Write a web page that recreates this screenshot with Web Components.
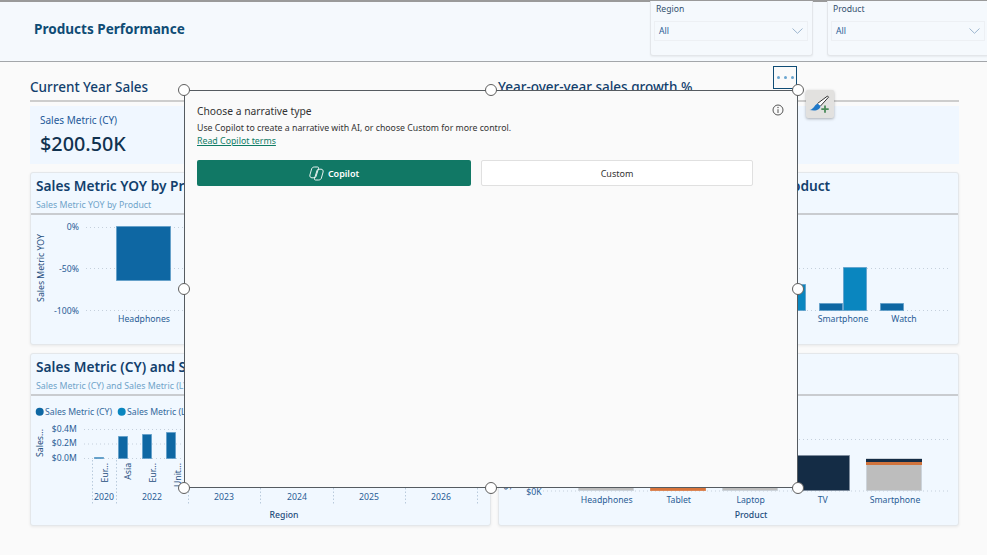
<!DOCTYPE html>
<html lang="en"><head><meta charset="utf-8"><title>Products Performance</title>
<style>
html,body{margin:0;padding:0;width:987px;height:555px;overflow:hidden;background:#fafafa;font-family:"Noto Sans","Open Sans",sans-serif;color:#0f4c81}
</style></head><body>
<template id="t-slicer"><style>
:host{display:flex;flex-direction:column;box-sizing:border-box;width:163px;height:55px;background:#f5f9fd;border:1px solid #e3e6ea;border-top:0;border-radius:0 0 3px 3px;padding:2px 4px 0 3px;box-shadow:0 1px 2px rgba(0,0,0,.06)}
.l{font-size:8.6px;line-height:13px;color:#33506e;padding-left:2px;height:18px}
.d{box-sizing:border-box;height:20px;border:1px solid #edf0f4;display:flex;align-items:center;justify-content:space-between;padding:0 4px 0 4px;font-size:8.6px;color:#2a5d96}
svg{display:block}
</style><div class="l"><slot name="label"></slot></div><div class="d"><span>All</span><svg width="11" height="6" viewBox="0 0 11 6"><path d="M.5.5 5.5 5.300 10.500.5" fill="none" stroke="#9db6cf" stroke-width="1"/></svg></div></template>

<template id="t-head"><style>
:host{display:flex;box-sizing:border-box;height:62px;background:#f5f9fd;border-top:2px solid #9a9a9a;border-bottom:1px solid #a3a6aa;justify-content:space-between}
.t{padding:18px 0 0 34px;font-size:13.55px;line-height:19px;font-weight:700;color:#0f4c75}
.s{display:flex;gap:14px;margin-right:-3px;height:55px;margin-top:-1px}
</style><div class="t"><slot name="title"></slot></div><div class="s"><slot></slot></div></template>

<template id="t-card"><style>
:host{display:flex;flex-direction:column;box-sizing:border-box;height:173px;background:#f1f8ff;border:1px solid #e4e7ea;border-radius:3px;box-shadow:0 1px 3px rgba(0,0,0,.07);overflow:hidden}
.h{box-sizing:border-box;height:42px;border-bottom:2px solid #c9ccd0;padding:2px 5px 0 5px;flex:none}
.a{font-size:13.7px;line-height:21px;font-weight:600;color:#123f6d;white-space:nowrap}
.b{font-size:8.8px;line-height:13px;margin-top:3px;color:#6fa3c9;white-space:nowrap}
.c{flex:1;position:relative;min-height:0}
</style><div class="h"><div class="a"><slot name="title"></slot></div><div class="b"><slot name="sub"></slot></div></div><div class="c"><slot></slot></div></template>

<template id="t-plot"><style>
:host{display:block;position:absolute;inset:0;font-size:9px;color:#2a5d96}
svg{position:absolute;left:0;top:0;display:block}
text{font-family:"Noto Sans","Open Sans",sans-serif}
</style><svg id="s" xmlns="http://www.w3.org/2000/svg"></svg></template>

<template id="t-handle"><style>
:host{display:block;position:absolute;width:12px;height:12px;box-sizing:border-box;border-radius:50%;background:#fff;border:1px solid #5e5e5e;z-index:3}
</style></template>

<template id="t-narr"><style>
:host{display:block;position:absolute;left:184px;top:90px;width:614px;height:398px;box-sizing:border-box;background:#fafafa;border:1px solid #555b60;z-index:2;color:#333}
.p{padding:13px 44px 0 12px;box-sizing:border-box}
.h{font-size:10.3px;line-height:15px;font-weight:400;color:#333}
.d{font-size:8.75px;line-height:13px;margin-top:3px;color:#333;white-space:nowrap}
a{display:block;font-size:8.8px;line-height:13px;color:#0f7c66;text-decoration:underline}
.btns{display:flex;gap:10px;margin-top:12px;width:556px}
.btn{height:26px;box-sizing:border-box;border-radius:2px;font-size:9px;display:flex;align-items:center;justify-content:center;gap:4px}
.pri{width:274px;background:#117865;color:#fff;font-weight:600}
.sec{width:272px;background:#fff;border:1px solid #e0e0e0;color:#333}
.i{position:absolute;right:13px;top:13px;display:block}
</style><svg class="i" width="12" height="12" viewBox="0 0 12 12"><circle cx="6" cy="6" r="5" fill="none" stroke="#555" stroke-width="1"/><path d="M6 5.200V9" stroke="#555" stroke-width="1"/><circle cx="6" cy="3.500" r=".7" fill="#555"/></svg>
<div class="p"><div class="h">Choose a narrative type</div><div class="d">Use Copilot to create a narrative with AI, or choose Custom for more control.</div><a>Read Copilot terms</a>
<div class="btns"><div class="btn pri"><svg width="15" height="15" viewBox="0 0 15 15" fill="none" stroke="#fff" stroke-width=".9" stroke-linejoin="round"><path d="M5.500 1H8.500C9.400 1 9.800 1.600 9.500 2.500L7 10.500C6.700 11.300 6 11.800 5 11.800H3C1.400 11.800 .5 10.500 .9 9L2.600 3C3 1.700 4 1 5.500 1Z"/><path d="M9.500 14H6.500C5.600 14 5.200 13.400 5.500 12.500L8 4.500C8.300 3.700 9 3.200 10 3.200H12C13.600 3.200 14.500 4.500 14.100 6L12.400 12C12 13.300 11 14 9.500 14Z"/></svg><span>Copilot</span></div><div class="btn sec">Custom</div></div></div></template>

<template id="t-more"><style>
:host{display:flex;position:absolute;left:773px;top:66px;width:24px;height:23px;box-sizing:border-box;border:1px solid #0f4c75;align-items:center;justify-content:center;gap:4px;z-index:1}
i{display:block;width:3px;height:3px;border-radius:50%;background:#6aa5cf}
</style><i></i><i></i><i></i></template>

<template id="t-brush"><style>
:host{display:block;position:absolute;left:806px;top:90px;width:28px;height:28px;background:#e2e1df;border-radius:2px;box-shadow:0 1px 3px rgba(0,0,0,.3);z-index:1}
svg{display:block}
</style><svg width="28" height="28" viewBox="0 0 28 28"><path d="M11.500 13.500 21.500 6 22.500 7.200 14.500 16" fill="#fff" stroke="#333" stroke-width="1"/><path d="M3.500 20C7.500 19.500 8.500 15 11.500 13.500L14.500 16C14.500 18.500 11.500 20.500 8 20.500Z" fill="#1f78c8"/><path d="M19 15.500V22.800M15.300 19.200H22.700" stroke="#4b8b5a" stroke-width="1.800" fill="none"/></svg></template>

<template id="t-page"><style>
:host{display:flex;flex-direction:column;width:987px;height:555px;position:relative;overflow:hidden}
main{display:flex;flex-direction:column;padding:0 28px 0 30px}
.titles{display:grid;grid-template-columns:461px 461px;gap:7px;height:40px;box-sizing:border-box;border-bottom:2px solid #cdcdcd;padding-top:16px}
.titles div{font-size:13.5px;line-height:19px;font-weight:500;color:#123f6d;white-space:nowrap}
.kpi{box-sizing:border-box;height:58px;margin-top:4px;background:#f0f7ff;padding:6px 0 0 10px}
.kl{font-size:10px;line-height:16px;color:#1f5a99}
.kv{font-size:19.8px;line-height:28px;color:#10324f;font-weight:500;margin-top:2px}
.g{display:grid;grid-template-columns:461px 461px;column-gap:7px;row-gap:8px;margin-top:8px;grid-auto-rows:173px}
</style><div><slot name="head"></slot></div><main><div class="titles"><div>Current Year Sales</div><div>Year-over-year sales growth %</div></div>
<div class="kpi"><div class="kl">Sales Metric (CY)</div><div class="kv">$200.50K</div></div>
<div class="g"><slot name="cards"></slot></div></main><slot name="over"></slot></template>

<products-page>
<report-head slot="head"><span slot="title">Products Performance</span>
  <report-slicer><span slot="label">Region</span></report-slicer>
  <report-slicer><span slot="label">Product</span></report-slicer>
</report-head>
<report-card slot="cards"><span slot="title">Sales Metric YOY by Product</span><span slot="sub">Sales Metric YOY by Product</span><report-plot kind="a"></report-plot></report-card>
<report-card slot="cards"><span slot="title">Sales Metric (CY) and Sales Metric (LY) by Product</span><report-plot kind="b"></report-plot></report-card>
<report-card slot="cards"><span slot="title">Sales Metric (CY) and Sales Metric (LY) by Region</span><span slot="sub">Sales Metric (CY) and Sales Metric (LY) by Year and Region</span><report-plot kind="c"></report-plot></report-card>
<report-card slot="cards"><span slot="title">Sales Metric by Product</span><report-plot kind="d"></report-plot></report-card>
<more-btn slot="over"></more-btn>
<brush-btn slot="over"></brush-btn>
<narrative-box slot="over"></narrative-box>
<sel-handle slot="over" style="left:178px;top:84px"></sel-handle>
<sel-handle slot="over" style="left:485px;top:84px"></sel-handle>
<sel-handle slot="over" style="left:792px;top:84px"></sel-handle>
<sel-handle slot="over" style="left:178px;top:283px"></sel-handle>
<sel-handle slot="over" style="left:792px;top:283px"></sel-handle>
<sel-handle slot="over" style="left:178px;top:482px"></sel-handle>
<sel-handle slot="over" style="left:485px;top:482px"></sel-handle>
<sel-handle slot="over" style="left:792px;top:482px"></sel-handle>
</products-page>
<script>
function reg(name,tid,extra){customElements.define(name,class extends HTMLElement{constructor(){super();const r=this.attachShadow({mode:"open"});r.appendChild(document.getElementById(tid).content.cloneNode(true));}connectedCallback(){if(extra)extra(this)}});}
const T=(x,y,s,o={})=>`<text x="${x}" y="${y}" font-size="${o.fs||8.7}" fill="${o.c||'#2a5d96'}" text-anchor="${o.a||'middle'}"${o.t?` transform="${o.t}"`:''}${o.w?` font-weight="${o.w}"`:''}>${s}</text>`;
const G=(x1,x2,y)=>`<path d="M${x1} ${y+.5}H${x2}" stroke="#c5d0dc" stroke-dasharray="1 3"/>`;
const V=(x,y1,y2)=>`<path d="M${x+.5} ${y1}V${y2}" stroke="#b9cbdc" stroke-dasharray="1.500 2"/>`;
const B=(x,y,w,h,c,s)=>`<rect x="${x+.5}" y="${y+.5}" width="${w-1}" height="${h-1}" fill="${c}" stroke="${s||'#5b9bc8'}" stroke-opacity=".7"/>`;
const D="#0e67a3",L="#0a86bf",A="#1f4d7d";
const R=(x,y,s,a)=>T(0,0,s,{t:`translate(${x} ${y}) rotate(-90)`,c:A,a});
const plots={
a(){return [G(55,459,12),G(55,459,53),G(55,459,95),
 T(48,15,"0%",{a:"end"}),T(48,57,"-50%",{a:"end"}),T(48,99,"-100%",{a:"end"}),
 R(12.500,53,"Sales Metric YOY"),
 B(85,11,55,55,D),T(113,107,"Headphones")].join("")},
b(){return [G(0,450,53),G(0,450,95),
 B(283,69,24,27,L),B(320,88,24,8,D),B(344,52,24,44,L),B(381,88,24,8,D),
 T(344,107,"Smartphone"),T(405,107,"Watch")].join("")},
c(){let s=[G(53,459,33),G(53,459,47.5),G(53,459,62),
 `<circle cx="8.700" cy="15.700" r="4" fill="${D}"/><circle cx="90.700" cy="15.700" r="4" fill="${L}"/>`,
 T(14,19,"Sales Metric (CY)",{a:"start",c:"#33689c"}),T(96,19,"Sales Metric (LY)",{a:"start",c:"#33689c"}),
 T(45.700,35.500,"$0.4M",{a:"end",fs:8.6}),T(45.700,50,"$0.2M",{a:"end",fs:8.6}),T(45.700,64.500,"$0.0M",{a:"end",fs:8.6}),
 R(11.500,47,"Sales..."),
 B(63,61,10,2,D),B(87,40,10,23,D),B(111,38,10,25,D),B(135,36,10,27,D)];
 const E=(x,t)=>T(0,0,t,{t:`translate(${x} 67) rotate(-90)`,a:"end",c:A});
 s.push(E(76.500,"Eur..."),E(100,"Asia"),E(125,"Eur..."),E(150,"Unit..."));
 s.push(T(73,104,"2020"),T(121,104,"2022"),T(193,104,"2023"),T(266,104,"2024"),T(338,104,"2025"),T(410,104,"2026"));
 [61,85,157,229,302,374,446].forEach(x=>s.push(V(x,64,109)));
 s.push(T(253,122,"Region",{c:A,w:500}));return s.join("")},
d(){return [G(44,450,43),G(44,450,94.500),
 T(42.700,98.500,"$0K",{a:"end"}),R(12,94,"Sales Metric","start"),
 B(79,87,56,8,"#bdbdbd","#c8d0d8"),B(151,87,56,8,"#d9743a","#d9743a"),B(223,87,56,8,"#bdbdbd","#c8d0d8"),
 B(295,59,56,36,"#142c45","#7d8c9c"),
 B(367,62,56,33,"#bdbdbd","#c8d0d8"),`<rect x="367" y="63" width="56" height="3" fill="#142c45"/><rect x="367" y="66" width="56" height="3" fill="#d0733c"/>`,
 T(107.700,107,"Headphones"),T(179.700,107,"Tablet"),T(251.700,107,"Laptop"),T(323.700,107,"TV"),T(396,107,"Smartphone"),
 T(252,122,"Product",{c:A,w:500})].join("")}
};
reg("products-page","t-page");reg("report-head","t-head");reg("report-slicer","t-slicer");reg("report-card","t-card");
reg("report-plot","t-plot",el=>{const s=el.shadowRoot.getElementById("s");s.setAttribute("width","459");s.setAttribute("height","130");s.innerHTML=plots[el.getAttribute("kind")]();});
reg("sel-handle","t-handle");reg("narrative-box","t-narr");reg("more-btn","t-more");reg("brush-btn","t-brush");
</script>
</body></html>
